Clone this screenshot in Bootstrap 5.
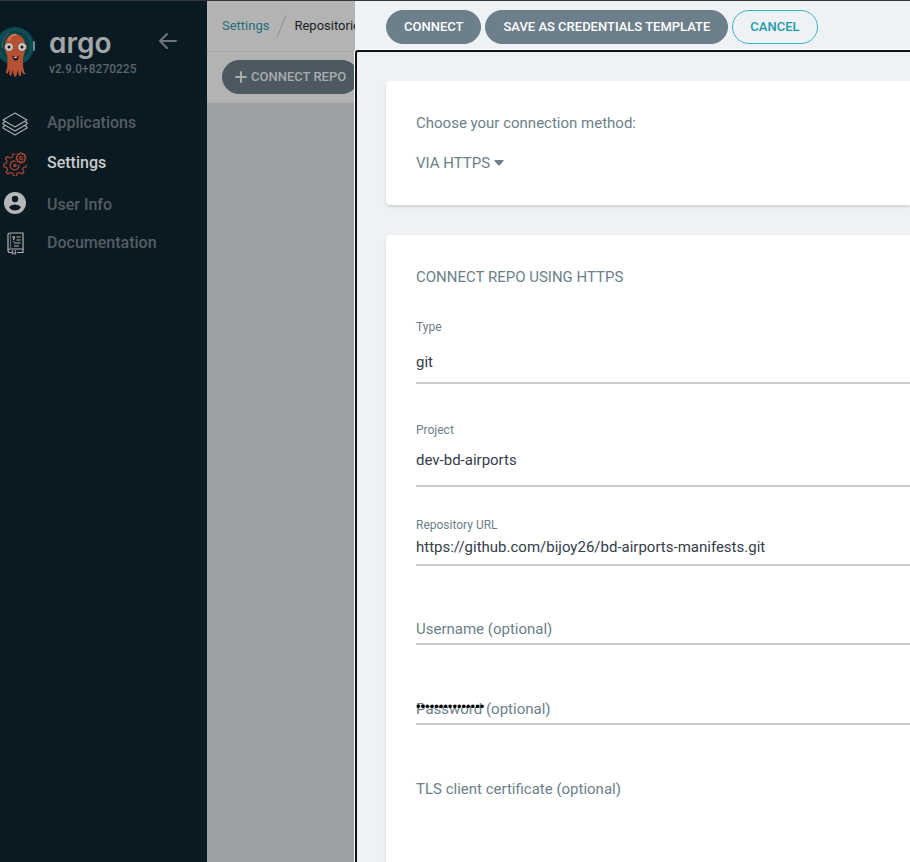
<!DOCTYPE html>
<html lang="en">
<head>
<meta charset="utf-8">
<meta name="viewport" content="width=device-width, initial-scale=1">
<title>Repositories - Argo CD</title>
<link rel="stylesheet" href="https://cdn.jsdelivr.net/npm/bootstrap@5.3.0/dist/css/bootstrap.min.css">
<style>
body { font-family: Roboto, "Liberation Sans", sans-serif; font-size: 15px; line-height: 20px; color: #363c4a; background: #eef2f5; }
.app-shell { border-top: 1px solid #33363c; }
.side-nav { flex: 0 0 207px; background: #0a1a22; }
.brand { height: 102px; padding-top: 24px; }
.brand-mascot { flex: 0 0 36px; }
.brand-text { width: 110px; padding-left: 13px; }
.brand-word { font-family: Inter, Lato, sans-serif; font-feature-settings: "cv11"; font-size: 28px; line-height: 36px; font-weight: 600; color: #a3a6a8; text-decoration: none; }
.brand-version { font-size: 12px; line-height: 16px; font-weight: 500; color: #5c666d; }
.collapse-btn { color: #6c757b; line-height: 0; margin-top: 8px; margin-left: 13px; }
.nav-item-link { height: 40px; color: #545d63; font-size: 16px; font-weight: 500; text-decoration: none; gap: 17px; }
.nav-item-link.current { color: #c8cacb; }
.nav-item-link svg { flex: 0 0 30px; }
.backdrop-page { flex: 0 0 148px; background: #9ca1a5; }
.crumbs { height: 51px; padding-left: 15px; font-size: 13px; background: #b3b3b3; border-bottom: 1px solid #a4a7a9; }
.crumbs a { color: #246f7b; text-decoration: none; }
.crumbs span { color: #1b1e24; }
.tool-strip { height: 51px; padding: 8px 0 0 15px; background: #b3b3b3; border-bottom: 1px solid #a9abad; }
.pill { height: 34px; padding: 0 17px; border: 1px solid #6d7f8b; border-radius: 17px; background: #6d7f8b; color: #fff; font-size: 13px; line-height: 16px; font-weight: 500; white-space: nowrap; }
.pill-outline { border-color: #3ab5c5; background: transparent; color: #1c9aaa; }
.pill-dim { padding: 0 12px; border-color: #4c5961; background: #4c5961; color: #a9acaf; }
.slide-panel { min-width: 0; background: #eef2f5; }
.panel-actions { height: 49px; padding: 9px 0 0 31px; gap: 4px; }
.panel-body { border: 2px solid #111; border-right: 0; border-bottom: 0; border-top-left-radius: 3px; box-shadow: 0 0 0 1px #fff; padding: 29px 0 0 29px; }
.sheet { background: #fff; border-radius: 4px 0 0 4px; box-shadow: 0 2px 3px rgba(0,0,0,.12); padding: 32px 0 0 30px; color: #6d7f8b; }
.sheet-method { height: 124px; margin-bottom: 30px; }
.method-btn { border: 0; padding: 0; background: transparent; color: inherit; margin-top: 20px; gap: 4px; }
.sheet-form { min-height: 632px; }
.sheet h2 { font-size: 15px; line-height: 20px; font-weight: 400; margin: 0 0 32px; }
.field { border-bottom: 2px solid #c9caca; }
.field label { display: block; font-size: 12px; line-height: 16px; }
.field input { display: block; width: 100%; border: 0; border-radius: 0; padding: 0; background: transparent; color: #363c4a; font-size: 15px; line-height: 20px; height: 20px; outline: 0; }
.field-type { height: 65px; margin-bottom: 38px; }
.field-type input { margin-top: 17px; }
.field-project { height: 65px; margin-bottom: 30px; }
.field-project input { margin-top: 12px; }
.field-url { height: 49px; margin-bottom: 53px; }
.field-url input { margin-top: 4px; }
.field-float { height: 26px; margin-bottom: 54px; }
.field-float label, .cert-label { font-size: 15px; line-height: 20px; }
.field-float input { position: absolute; inset: -2px 0 auto 0; }
.field-float input.secret { color: #000; font-size: 13px; font-family: "Liberation Sans", sans-serif; }
</style>
<script src="https://cdn.jsdelivr.net/npm/bootstrap@5.3.0/dist/js/bootstrap.bundle.min.js"></script>
</head>
<body>
<div class="app-shell d-flex min-vh-100 overflow-hidden">
  <nav class="side-nav" aria-label="Main">
    <div class="brand d-flex align-items-start">
      <svg class="brand-mascot" width="36" height="54" viewBox="0 0 36 54" aria-hidden="true">
        <circle cx="15" cy="21" r="19" fill="#0c4a50"/>
        <circle cx="15" cy="21" r="16" fill="#0b4046" stroke="#14595c"/>
        <path d="M2 23Q2 12 9 8" fill="none" stroke="#427477" stroke-width="1"/>
        <rect x="33" y="16" width="2" height="10" rx="1" fill="#71888f"/>
        <path d="M5 20C5 6 24 6 25 19C26 30 22 30 23 38Q23 47 26 49Q22 50 21 45L21 51Q18 52 18 45L16 52Q13 52 13 45L11 51Q8 51 10 44L7 49Q5 49 7 43Q8 35 7 30Q5 27 5 20Z" fill="#b65032"/>
        <path d="M9 15Q11 9 16 10" fill="none" stroke="#cc7654" stroke-width="2" stroke-linecap="round"/>
        <circle cx="9" cy="22" r="4.500" fill="#c4c5c3" stroke="#9d412b"/><circle cx="22" cy="22" r="4.500" fill="#c4c5c3" stroke="#9d412b"/>
        <circle cx="9" cy="22" r="1.500" fill="#171719"/><circle cx="22" cy="22" r="1.500" fill="#171719"/>
        <path d="M12 31Q16 33 19 31Q18 36 15 36Q13 35 12 31Z" fill="#211719"/><path d="M14 32h3v1h-3z" fill="#c4c5c3"/>
      </svg>
      <div class="brand-text">
        <a class="brand-word d-block" href="#">argo</a>
        <div class="brand-version">v2.9.0+8270225</div>
      </div>
      <button class="collapse-btn btn p-0 border-0" type="button" aria-label="Collapse sidebar">
        <svg width="18" height="16" viewBox="0 0 18 16" fill="none" stroke="currentColor" stroke-width="2" stroke-linecap="round" stroke-linejoin="round" aria-hidden="true"><path d="M8 1L1 8l7 7M1 8h16"/></svg>
      </button>
    </div>
    <a class="nav-item-link d-flex align-items-center" href="#">
      <svg width="30" height="28" viewBox="0 0 30 28" fill="none" stroke="#a8acae" stroke-width="1.200" stroke-linejoin="round" aria-hidden="true"><path d="M15 4l12 7-12 7-12-7zM5 12.500L3 14v1l12 7 12-7v-1l-2-1.500M5 16.500L3 18v1l12 7 12-7v-1l-2-1.500"/></svg>
      Applications</a>
    <a class="nav-item-link current d-flex align-items-center" href="#">
      <svg width="30" height="26" viewBox="0 0 30 26" fill="none" stroke="#b5472f" stroke-width="1.200" stroke-linejoin="round" stroke-linecap="round" aria-hidden="true">
        <path d="M15 4h-2l-.5 3-2.500 1L7.500 6.500l-2 2L7 11l-1 2.500-2 .5v3l2.500.5 1 2.500L6 22l2 2 2.500-1.500 2.500 1 .5 2.500h3l.5-2.500 2.500-1L22 24l2-2-1.500-2.500 1-2L26 17v-2"/>
        <path d="M15 11a4.500 4.500 0 1 0 4 4"/><circle cx="15" cy="15.500" r="1.200"/>
        <circle cx="21" cy="8" r="1.500"/>
        <path d="M20.200 3h1.600l.5 1.500 1.400-.7 1.200 1.200-.7 1.400 1.500.5v2l-1.500.5.7 1.400-1.200 1.200-1.400-.7-.5 1.500h-1.600l-.5-1.500-1.400.7-1.200-1.200.7-1.400-1.500-.5v-2l1.500-.5-.7-1.400 1.200-1.200 1.400.7z"/>
      </svg>
      Settings</a>
    <a class="nav-item-link d-flex align-items-center" href="#">
      <svg width="30" height="24" viewBox="0 0 30 24" aria-hidden="true"><circle cx="15" cy="12" r="11" fill="#b5b7b8"/><circle cx="15" cy="8" r="3.200" fill="#0a1a22"/><path d="M9 16Q11 13.500 15 13.500T21 16Q19 19.500 15 19.500T9 16z" fill="#0a1a22"/></svg>
      <span class="pt-1">User Info</span></a>
    <a class="nav-item-link d-flex align-items-center" href="#">
      <svg width="30" height="24" viewBox="0 0 30 24" fill="none" stroke="#afb2b4" stroke-width="1.200" aria-hidden="true"><path d="M8 20V4q0-2 2-2h13v16H10q-2 0-2 1.700T10 21.500h2M17 21.500h6V18"/><path d="M10.500 2.500v15" stroke="#59636a"/><path d="M12.500 6.500q0-1 1-1t1 1q0 .7-1 1.500v1M13.500 10v1M16.500 6h4M16.500 9h4M14 12h6.500M14 15h5"/><path d="M12.500 19v4l1.500-1 1.500 1v-4" stroke="#8d86a0"/></svg>
      Documentation</a>
  </nav>
  <main class="backdrop-page overflow-hidden">
    <div class="crumbs d-flex align-items-center text-nowrap">
      <a href="#">Settings</a>
      <svg class="flex-shrink-0 mx-2" width="9" height="22" viewBox="0 0 9 22" stroke="#8b8f92" aria-hidden="true"><path d="M0 22L9 0"/></svg>
      <span>Repositories</span>
    </div>
    <div class="tool-strip">
      <button class="pill pill-dim d-inline-flex align-items-center" type="button">
        <svg class="me-1" width="12" height="12" viewBox="0 0 12 12" stroke="currentColor" stroke-width="2" stroke-linecap="round" aria-hidden="true"><path d="M6 1v10M1 6h10"/></svg>
        CONNECT REPO</button>
    </div>
  </main>
  <section class="slide-panel flex-grow-1 d-flex flex-column" aria-label="Connect repository">
    <div class="panel-actions d-flex align-items-start">
      <button class="pill" type="button">CONNECT</button>
      <button class="pill" type="button">SAVE AS CREDENTIALS TEMPLATE</button>
      <button class="pill pill-outline" type="button">CANCEL</button>
    </div>
    <form class="panel-body flex-grow-1">
      <div class="sheet sheet-method">
        <div>Choose your connection method:</div>
        <button class="method-btn d-flex align-items-center" type="button">VIA HTTPS
          <svg width="10" height="6" viewBox="0 0 10 6" fill="currentColor" aria-hidden="true"><path d="M1 0h8q1 0 .5 1L5.500 5.500q-.5.5-1 0L.5 1Q0 0 1 0z"/></svg>
        </button>
      </div>
      <div class="sheet sheet-form">
        <h2>CONNECT REPO USING HTTPS</h2>
        <div class="field field-type"><label for="type">Type</label><input id="type" type="text" value="git"></div>
        <div class="field field-project"><label for="project">Project</label><input id="project" type="text" value="dev-bd-airports"></div>
        <div class="field field-url"><label for="url">Repository URL</label><input id="url" type="text" value="https://github.com/bijoy26/bd-airports-manifests.git"></div>
        <div class="field field-float position-relative"><label for="user">Username (optional)</label><input id="user" type="text"></div>
        <div class="field field-float position-relative"><label for="pass">Password (optional)</label><input id="pass" class="secret" type="password" value="passwordpasswor"></div>
        <label class="cert-label" for="cert">TLS client certificate (optional)</label>
        <input id="cert" class="visually-hidden" type="text">
      </div>
    </form>
  </section>
</div>
</body>
</html>
